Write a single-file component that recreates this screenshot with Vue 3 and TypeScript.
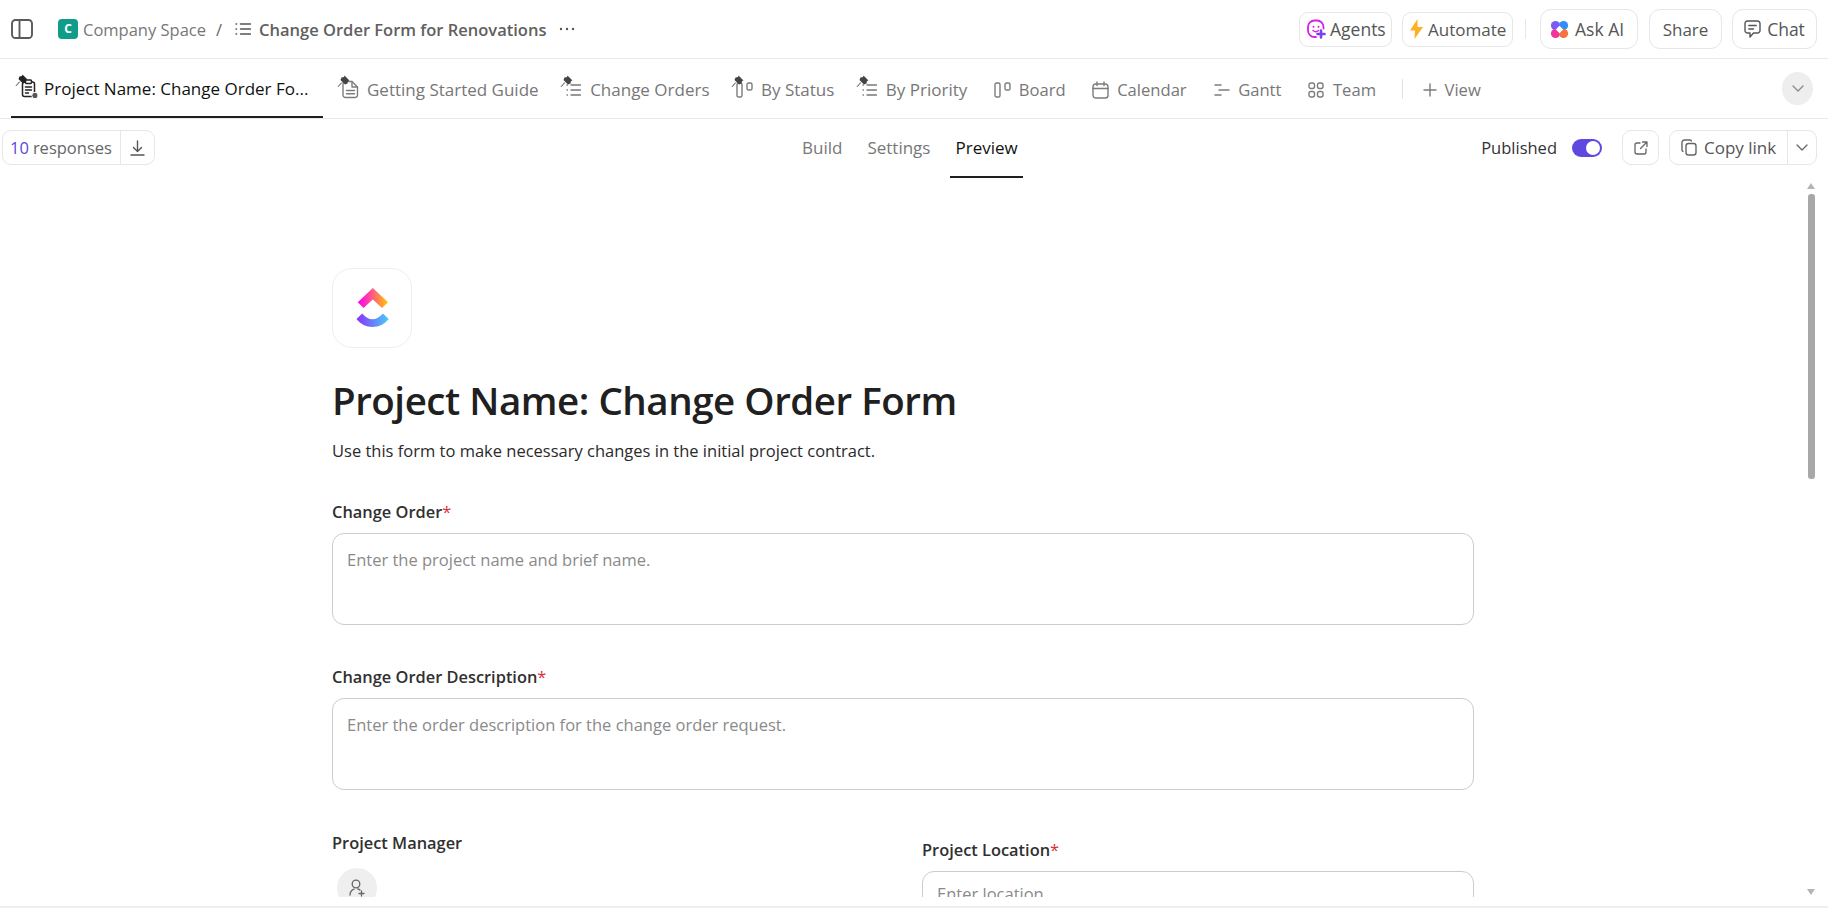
<script setup lang="ts">
type Tab = { label: string; icon: string; pin: boolean; active?: boolean }
const tabs: Tab[] = [
  { label: 'Project Name: Change Order Fo...', icon: 'form', pin: true, active: true },
  { label: 'Getting Started Guide', icon: 'doc', pin: true },
  { label: 'Change Orders', icon: 'list', pin: true },
  { label: 'By Status', icon: 'board', pin: true },
  { label: 'By Priority', icon: 'list', pin: true },
  { label: 'Board', icon: 'board', pin: false },
  { label: 'Calendar', icon: 'calendar', pin: false },
  { label: 'Gantt', icon: 'gantt', pin: false },
  { label: 'Team', icon: 'team', pin: false },
]
</script>

<template>
  <div class="page">
    <header class="topbar">
      <svg class="sidebar-icon" width="22" height="20" viewBox="0 0 22 20" fill="none" stroke="#5a5a5a" stroke-width="1.9">
        <rect x="1" y="1" width="20" height="18" rx="3.5" />
        <path d="M8.5 1v18" />
      </svg>
      <span class="space-badge">C</span>
      <span class="crumb">Company Space</span>
      <span class="slash">/</span>
      <svg class="crumb-list" width="16" height="14" viewBox="0 0 16 14" fill="none" stroke="#555" stroke-width="1.4" stroke-linecap="round">
        <path d="M5.5 2h10M5.5 7h10M5.500 12h10M1 2h.6M1 7h.6M1 12h.6" />
      </svg>
      <span class="doc-title">Change Order Form for Renovations</span>
      <svg class="dots" width="16" height="4" viewBox="0 0 16 4" fill="#555">
        <circle cx="2" cy="2" r="1.2" /><circle cx="8" cy="2" r="1.2" /><circle cx="14" cy="2" r="1.2" />
      </svg>

      <div class="top-actions">
        <button class="btn small agents">
          <svg width="20" height="20" viewBox="0 0 20 20" fill="none">
            <path d="M17.5 9.5V8A6.5 6.5 0 0 0 11 1.500H8.500A6.500 6.500 0 0 0 2 8v3.500A6.500 6.500 0 0 0 8.500 18h1.500" stroke="#d61fe8" stroke-width="1.800" stroke-linecap="round" />
            <circle cx="7.500" cy="7.800" r="1" fill="#d61fe8" /><circle cx="12.500" cy="7.800" r="1" fill="#d61fe8" />
            <path d="M7 11.500c1.500 1.300 4 1.300 5.500 0" stroke="#d61fe8" stroke-width="1.500" stroke-linecap="round" />
            <path d="M15 11.500v7M11.500 15h7" stroke="#7a3ff0" stroke-width="2.600" stroke-linecap="round" />
          </svg>
          Agents
        </button>
        <button class="btn small automate">
          <svg width="13" height="20" viewBox="0 0 13 20" fill="#fdb022"><path d="M7.500 0 0 11.500h5L4.500 20 13 8H7.500z" /></svg>
          Automate
        </button>
        <span class="top-divider"></span>
        <button class="btn big ask">
          <svg width="19" height="19" viewBox="0 0 19 19">
            <circle cx="5.500" cy="5.500" r="4.600" fill="#7a5cf5" />
            <circle cx="13.500" cy="5.500" r="4.600" fill="#2f8ff7" />
            <circle cx="5.500" cy="13.500" r="4.600" fill="#f0359c" />
            <circle cx="13.500" cy="13.500" r="4.600" fill="#f5733d" />
            <path d="M9.500 5.800 13.200 9.500 9.500 13.200 5.800 9.500z" fill="#fff" />
          </svg>
          Ask AI
        </button>
        <button class="btn big share">Share</button>
        <button class="btn big chat">
          <svg width="17" height="19" viewBox="0 0 17 19" fill="none" stroke="#555" stroke-width="1.400" stroke-linecap="round" stroke-linejoin="round">
            <path d="M3.500 1h10A2.500 2.500 0 0 1 16 3.500v7a2.500 2.500 0 0 1-2.500 2.500H9.500L6 17v-4H3.500A2.500 2.500 0 0 1 1 10.500v-7A2.500 2.500 0 0 1 3.500 1z" />
            <path d="M4.800 5.500h7.400M4.800 9h4.700" />
          </svg>
          Chat
        </button>
      </div>
    </header>

    <nav class="tabbar">
      <a v-for="tab in tabs" :key="tab.label" class="tab" :class="{ active: tab.active, plain: !tab.pin }">
        <span class="tab-icon">
          <svg v-if="tab.pin" class="pin" width="13" height="13" viewBox="0 0 13 13" :fill="tab.active ? '#222' : '#444'">
            <path d="M7.500 0.500 12.500 5.500 11 6 10.500 8.500 8 9.500 3.500 5 4.500 2.500 7 2z" />
            <path d="M4.800 7.500 1 11.800" stroke="#444" stroke-width="1" fill="none" />
          </svg>
          <svg v-if="tab.icon === 'form'" width="17" height="20" viewBox="0 0 17 20" fill="none" stroke="#222" stroke-width="1.500" stroke-linecap="round">
            <rect x="1.500" y="3" width="12" height="14.500" rx="2" />
            <rect x="4.500" y="1" width="6" height="3.500" rx="1" fill="#fff" />
            <path d="M4.500 8h6M4.500 11h6M4.500 14h3" />
            <circle cx="14" cy="16.500" r="3.200" fill="#555" stroke="#fff" stroke-width="1" />
          </svg>
          <svg v-else-if="tab.icon === 'doc'" width="17" height="19" viewBox="0 0 17 19" fill="none" stroke="#7c7c7c" stroke-width="1.400" stroke-linecap="round" stroke-linejoin="round">
            <path d="M3.500 1.500h6.500l5.500 5.500v8a2.500 2.500 0 0 1-2.500 2.500H3.500A2.500 2.500 0 0 1 1 15V4a2.500 2.500 0 0 1 2.500-2.500z" />
            <path d="M10 1.500V7h5.500M4.500 10.500h8M4.500 13.800h8" />
          </svg>
          <svg v-else-if="tab.icon === 'list'" width="15" height="14" viewBox="0 0 15 14" fill="none" stroke="#777" stroke-width="1.400" stroke-linecap="round">
            <path d="M5 2h9.500M5 7h9.500M5 12h9.500M1 2h.4M1 7h.4M1 12h.4" />
          </svg>
          <svg v-else-if="tab.icon === 'board'" width="17" height="16" viewBox="0 0 17 16" fill="none" stroke="#7c7c7c" stroke-width="1.400">
            <rect x="1" y="1" width="5" height="14" rx="1.600" />
            <rect x="11" y="1" width="5" height="7" rx="1.600" />
          </svg>
          <svg v-else-if="tab.icon === 'calendar'" width="17" height="18" viewBox="0 0 17 18" fill="none" stroke="#7c7c7c" stroke-width="1.400" stroke-linecap="round">
            <rect x="1" y="3" width="15" height="14" rx="2.800" />
            <path d="M1 7.500h15M5 1v3.500M12 1v3.500" />
          </svg>
          <svg v-else-if="tab.icon === 'gantt'" width="16" height="14" viewBox="0 0 16 14" fill="none" stroke="#7c7c7c" stroke-width="1.500" stroke-linecap="round">
            <path d="M1 2h6M5 7h10M1 12h6" />
          </svg>
          <svg v-else width="16" height="16" viewBox="0 0 16 16" fill="none" stroke="#7c7c7c" stroke-width="1.400">
            <rect x="1" y="1" width="5.500" height="5.500" rx="2" />
            <rect x="9.500" y="1" width="5.500" height="5.500" rx="2" />
            <rect x="1" y="9.500" width="5.500" height="5.500" rx="2" />
            <rect x="9.500" y="9.500" width="5.500" height="5.500" rx="2" />
          </svg>
        </span>
        <span class="tab-label">{{ tab.label }}</span>
      </a>
      <span class="tab-divider"></span>
      <a class="add-view">
        <svg width="14" height="14" viewBox="0 0 14 14" stroke="#7c7c7c" stroke-width="1.400" stroke-linecap="round"><path d="M7 1v12M1 7h12" /></svg>
        <span>View</span>
      </a>
      <button class="collapse">
        <svg width="12" height="7" viewBox="0 0 12 7" fill="none" stroke="#888" stroke-width="1.300" stroke-linecap="round" stroke-linejoin="round"><path d="M1 1l5 5 5-5" /></svg>
      </button>
    </nav>

    <section class="subbar">
      <div class="group responses">
        <span class="resp-text"><b>10</b> responses</span>
        <span class="resp-dl">
          <svg width="15" height="16" viewBox="0 0 15 16" fill="none" stroke="#555" stroke-width="1.400" stroke-linecap="round" stroke-linejoin="round">
            <path d="M7.500 1v10M3.500 7.500l4 4 4-4M1 15h13" />
          </svg>
        </span>
      </div>
      <div class="modes">
        <span class="mode">Build</span>
        <span class="mode">Settings</span>
        <span class="mode current">Preview</span>
      </div>
      <div class="publish">
        <span class="pub-label">Published</span>
        <span class="toggle"><i></i></span>
        <button class="ext">
          <svg width="14" height="14" viewBox="0 0 14 14" fill="none" stroke="#666" stroke-width="1.300" stroke-linecap="round" stroke-linejoin="round">
            <path d="M6 2H3a2 2 0 0 0-2 2v7a2 2 0 0 0 2 2h7a2 2 0 0 0 2-2V8M8.500 1H13v4.500M13 1 6.500 7.500" />
          </svg>
        </button>
        <div class="group copy">
          <span class="copy-main">
            <svg width="16" height="17" viewBox="0 0 16 17" fill="none" stroke="#666" stroke-width="1.400">
              <rect x="5" y="4.500" width="10" height="11.500" rx="2.500" />
              <path d="M2.500 12.500A1.500 1.500 0 0 1 1 11V3.500A2.500 2.500 0 0 1 3.500 1H9a1.500 1.500 0 0 1 1.500 1.500" />
            </svg>
            Copy link
          </span>
          <span class="copy-caret">
            <svg width="12" height="7" viewBox="0 0 12 7" fill="none" stroke="#666" stroke-width="1.300" stroke-linecap="round" stroke-linejoin="round"><path d="M1 1l5 5 5-5" /></svg>
          </span>
        </div>
      </div>
    </section>

    <main class="viewport">
      <form class="form" @submit.prevent>
        <div class="logo-box">
          <svg width="33" height="40" viewBox="0 0 33 40">
            <defs>
              <linearGradient id="cu-up" x1="0" y1="0" x2="1" y2="0">
                <stop offset="0.05" stop-color="#ff02f0" /><stop offset="1" stop-color="#ffc800" />
              </linearGradient>
              <linearGradient id="cu-down" x1="0" y1="0" x2="1" y2="0">
                <stop offset="0" stop-color="#8930fd" /><stop offset="1" stop-color="#49ccf9" />
              </linearGradient>
            </defs>
            <path d="M16.800 0 32 14.200 26 20 16.800 11.500 7.600 20 1.800 14.200z" fill="url(#cu-up)" />
            <path d="M0.500 31 6.200 25.500C9.400 29.300 12.800 31.300 16.500 31.300S23.700 29.300 26.900 25.500L32.700 31C28.500 36.300 23 39 16.500 39S4.700 36.300 0.500 31z" fill="url(#cu-down)" />
          </svg>
        </div>
        <h1 class="title">Project Name: Change Order Form</h1>
        <p class="desc">Use this form to make necessary changes in the initial project contract.</p>

        <label class="label first">Change Order<em>*</em></label>
        <div class="area"><span class="ph">Enter the project name and brief name.</span></div>

        <label class="label second">Change Order Description<em>*</em></label>
        <div class="area"><span class="ph">Enter the order description for the change order request.</span></div>

        <div class="cols">
          <div class="col-left">
            <label class="label">Project Manager</label>
            <span class="avatar">
              <svg width="18" height="18" viewBox="0 0 18 18" fill="none" stroke="#666" stroke-width="1.300" stroke-linecap="round">
                <circle cx="8" cy="5" r="3.800" />
                <path d="M2 16c0-3 1.800-5 4-5.800M9.800 10c1 .2 1.700.5 2.200 1M13.500 12v5M11 14.500h5" />
              </svg>
            </span>
          </div>
          <div class="col-right">
            <label class="label">Project Location<em>*</em></label>
            <div class="field"><span class="ph">Enter location</span></div>
          </div>
        </div>
      </form>
      <div class="scroll">
        <span class="arrow up"></span>
        <span class="thumb"></span>
        <span class="arrow down"></span>
      </div>
    </main>
    <div class="bottom-gap"></div>
  </div>
</template>

<style>
html, body { margin: 0; padding: 0; background: #fff; overflow: hidden; }
</style>

<style scoped>
.page {
  width: 1828px;
  height: 908px;
  display: flex;
  flex-direction: column;
  font-family: "Open Sans", "Noto Sans", "Liberation Sans", sans-serif;
  font-size: 16px;
  color: #202020;
  background: #fff;
  overflow: hidden;
}
button {
  font: inherit;
  color: inherit;
  background: #fff;
  padding: 0;
  cursor: pointer;
}

/* top bar */
.topbar {
  height: 59px;
  box-sizing: border-box;
  flex: none;
  display: flex;
  align-items: center;
  padding: 0 11px;
  border-bottom: 1px solid #e9e9e9;
}
.sidebar-icon { flex: none; }
.space-badge {
  flex: none;
  width: 20px;
  height: 20px;
  margin-left: 25px;
  border-radius: 4px;
  background: #0f9d8a;
  color: #fff;
  font-size: 12px;
  font-weight: 700;
  line-height: 20px;
  text-align: center;
}
.crumb { margin-left: 5px; color: #777; font-size: 16.5px; }
.slash { margin-left: 10px; color: #666; font-size: 16.5px; }
.crumb-list { margin-left: 13px; flex: none; }
.doc-title { margin-left: 8px; color: #606060; font-size: 16.5px; font-weight: 600; }
.dots { margin-left: 13px; flex: none; }
.top-actions { margin-left: auto; display: flex; align-items: center; }
.btn {
  display: flex;
  align-items: center;
  justify-content: center;
  gap: 6px;
  border: 1px solid #e6e6e6;
  color: #555;
  font-size: 17px;
  font-weight: 500;
  box-sizing: border-box;
  white-space: nowrap;
}
.btn.small { height: 35px; border-radius: 9px; justify-content: flex-start; }
.btn.big { height: 40px; border-radius: 11px; margin-left: 11px; }
.agents { width: 93px; gap: 4px; padding-left: 6px; font-size: 17.5px; }
.automate { width: 111px; margin-left: 10px; gap: 5px; padding-left: 7px; }
.top-divider { width: 1px; height: 20px; background: #e6e6e6; margin: 0 2px 0 12px; }
.btn.ask { width: 98px; margin-left: 12px; justify-content: flex-start; padding-left: 9px; font-size: 17.5px; }
.btn.share { width: 73px; }
.btn.chat { width: 85px; margin-left: 10px; font-size: 17.5px; }

/* tabs */
.tabbar {
  height: 60px;
  flex: none;
  box-sizing: border-box;
  display: flex;
  align-items: center;
  padding: 0 15px 0 11px;
  border-bottom: 1px solid #e9e9e9;
}
.tab {
  height: 59px;
  box-sizing: border-box;
  padding-top: 2px;
  display: flex;
  align-items: center;
  gap: 8px;
  margin-right: 26.5px;
  color: #777;
  font-size: 17px;
  font-weight: 500;
  white-space: nowrap;
}
.tab.plain { font-size: 16.6px; }
.tab.active {
  width: 312px;
  margin-right: 19px;
  padding-left: 9px;
  gap: 5px;
  color: #111;
  border-bottom: 2px solid #1f1f1f;
}
.tab-icon {
  position: relative;
  width: 17px;
  height: 20px;
  display: flex;
  align-items: center;
  justify-content: center;
  flex: none;
}
.tab.active .tab-icon { width: 19px; }
.pin { position: absolute; left: -5px; top: -5px; }
.tab-divider { width: 1px; height: 20px; background: #e2e2e2; margin-left: -1px; }
.add-view {
  display: flex;
  align-items: center;
  gap: 8px;
  margin-left: 20px;
  padding-top: 2px;
  color: #777;
  font-size: 16.6px;
  font-weight: 500;
}
.collapse {
  margin-left: auto;
  width: 31px;
  height: 33px;
  border: 0;
  border-radius: 50%;
  background: #eeeeee;
  display: flex;
  align-items: center;
  justify-content: center;
}

/* sub bar */
.subbar {
  height: 59px;
  flex: none;
  display: grid;
  grid-template-columns: 800px auto 1fr;
  align-items: start;
  padding: 11px 11px 0 2px;
  box-sizing: border-box;
}
.group {
  height: 35px;
  box-sizing: border-box;
  display: flex;
  align-items: stretch;
  border: 1px solid #e6e6e6;
  border-radius: 9px;
}
.responses { width: 153px; }
.resp-text {
  width: 118px;
  padding-left: 7px;
  box-sizing: border-box;
  display: flex;
  align-items: center;
  gap: 4px;
  border-right: 1px solid #e6e6e6;
  color: #666;
  font-size: 16.5px;
  font-weight: 500;
  white-space: nowrap;
}
.resp-text b { color: #5b45e0; font-weight: 500; }
.resp-dl { flex: 1; display: flex; align-items: center; justify-content: center; }
.modes {
  display: flex;
  height: 35px;
  align-items: center;
}
.mode {
  position: relative;
  color: #777;
  font-size: 17px;
  font-weight: 500;
  margin-right: 25px;
}
.mode.current {
  color: #111;
  margin-right: 0;
}
.mode.current::after {
  content: "";
  position: absolute;
  left: -5px;
  right: -5px;
  top: 40px;
  height: 2px;
  background: #1f1f1f;
}
.publish { display: flex; align-items: center; height: 35px; justify-self: end; }
.pub-label { color: #333; font-size: 16.5px; }
.toggle {
  margin-left: 15px;
  width: 30px;
  height: 18px;
  border-radius: 9px;
  background: #5f48e0;
  display: flex;
  align-items: center;
  justify-content: flex-end;
  padding: 0 2px;
  box-sizing: border-box;
}
.toggle i { width: 14px; height: 14px; border-radius: 50%; background: #fff; }
.ext {
  margin-left: 20px;
  width: 37px;
  height: 35px;
  border: 1px solid #e6e6e6;
  border-radius: 9px;
  display: flex;
  align-items: center;
  justify-content: center;
}
.copy { width: 148px; margin-left: 10px; }
.copy-main {
  width: 118px;
  box-sizing: border-box;
  padding-left: 11px;
  display: flex;
  align-items: center;
  gap: 7px;
  border-right: 1px solid #e6e6e6;
  color: #555;
  font-size: 17px;
  font-weight: 500;
  white-space: nowrap;
}
.copy-caret { flex: 1; display: flex; align-items: center; justify-content: center; }

/* form */
.viewport {
  flex: none;
  height: 719px;
  position: relative;
  overflow: hidden;
}
.form {
  width: 1142px;
  margin-left: 332px;
  padding-top: 90px;
  display: flex;
  flex-direction: column;
  align-items: stretch;
}
.logo-box {
  width: 80px;
  height: 80px;
  box-sizing: border-box;
  border: 1px solid #eeeeee;
  border-radius: 20px;
  display: flex;
  align-items: center;
  justify-content: center;
}
.title {
  margin: 25px 0 0;
  font-size: 38.5px;
  line-height: 54px;
  font-weight: 600;
  letter-spacing: -0.47px;
  color: #202020;
}
.desc {
  margin: 12px 0 0;
  font-size: 16.5px;
  line-height: 24px;
  color: #2a2a2a;
}
.label {
  display: block;
  font-size: 16.4px;
  line-height: 22px;
  font-weight: 600;
  color: #303030;
}
.label em { color: #d92d3a; font-style: normal; font-weight: 500; }
.label.first { margin-top: 38px; }
.label.second { margin-top: 41px; }
.area {
  margin-top: 10px;
  height: 92px;
  box-sizing: border-box;
  border: 1px solid #cccccc;
  border-radius: 12px;
  padding: 14px 14px;
}
.ph { color: #8a8a8a; font-size: 16.5px; line-height: 24px; }
.cols {
  margin-top: 42px;
  display: grid;
  grid-template-columns: 1fr 552px;
  column-gap: 16px;
  align-items: start;
}
.col-right { padding-top: 7px; }
.avatar {
  margin: 14px 0 0 5px;
  width: 40px;
  height: 40px;
  border-radius: 50%;
  background: #efefef;
  display: flex;
  align-items: center;
  justify-content: center;
}
.field {
  margin-top: 10px;
  height: 44px;
  box-sizing: border-box;
  border: 1px solid #cccccc;
  border-radius: 12px;
  padding: 10px 14px;
}

/* scrollbar */
.scroll {
  position: absolute;
  top: 0;
  right: 13px;
  bottom: 0;
  width: 8px;
  padding-top: 5px;
  box-sizing: border-box;
  display: flex;
  flex-direction: column;
  align-items: center;
}
.thumb { width: 7px; height: 285px; margin-top: 5px; background: #a8a8a8; border-radius: 3px; }
.arrow { width: 0; height: 0; border-left: 4px solid transparent; border-right: 4px solid transparent; }
.arrow.up { border-bottom: 6px solid #b5b5b5; }
.arrow.down { margin-top: auto; margin-bottom: 2px; border-top: 6px solid #b5b5b5; }

.bottom-gap {
  flex: 1;
  border-bottom: 2px solid #eeeeee;
}
</style>
